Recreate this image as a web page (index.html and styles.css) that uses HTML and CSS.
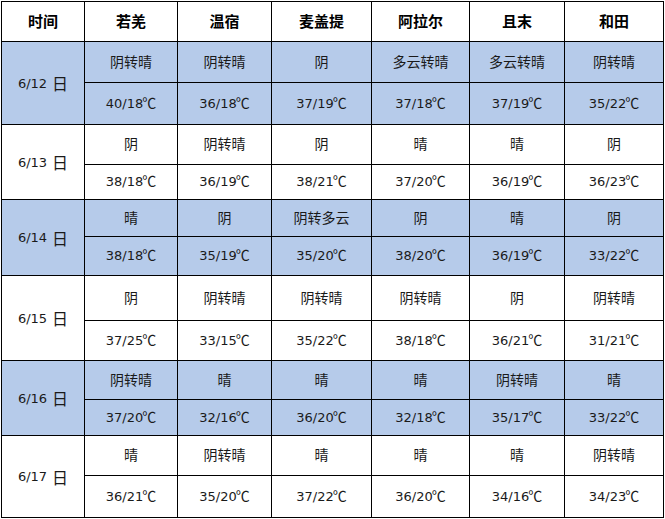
FILE: index.html
```html
<!DOCTYPE html>
<html lang="zh-CN">
<head>
<meta charset="utf-8">
<link rel="stylesheet" href="styles.css">
</head>
<body>
<div class="sheet">
  <div class="head">时间</div>
  <div class="head">若羌</div>
  <div class="head">温宿</div>
  <div class="head">麦盖提</div>
  <div class="head">阿拉尔</div>
  <div class="head">且末</div>
  <div class="head">和田</div>

  <div class="date blue">6/12<span class="ri">日</span></div>
  <div class="w blue">阴转晴</div><div class="w blue">阴转晴</div><div class="w blue">阴</div><div class="w blue">多云转晴</div><div class="w blue">多云转晴</div><div class="w blue">阴转晴</div>
  <div class="t blue">40/18<span class="deg">℃</span></div><div class="t blue">36/18<span class="deg">℃</span></div><div class="t blue">37/19<span class="deg">℃</span></div><div class="t blue">37/18<span class="deg">℃</span></div><div class="t blue">37/19<span class="deg">℃</span></div><div class="t blue">35/22<span class="deg">℃</span></div>

  <div class="date">6/13<span class="ri">日</span></div>
  <div class="w">阴</div><div class="w">阴转晴</div><div class="w">阴</div><div class="w">晴</div><div class="w">晴</div><div class="w">阴</div>
  <div class="t">38/18<span class="deg">℃</span></div><div class="t">36/19<span class="deg">℃</span></div><div class="t">38/21<span class="deg">℃</span></div><div class="t">37/20<span class="deg">℃</span></div><div class="t">36/19<span class="deg">℃</span></div><div class="t">36/23<span class="deg">℃</span></div>

  <div class="date blue">6/14<span class="ri">日</span></div>
  <div class="w blue">晴</div><div class="w blue">阴</div><div class="w blue">阴转多云</div><div class="w blue">阴</div><div class="w blue">晴</div><div class="w blue">阴</div>
  <div class="t blue">38/18<span class="deg">℃</span></div><div class="t blue">35/19<span class="deg">℃</span></div><div class="t blue">35/20<span class="deg">℃</span></div><div class="t blue">38/20<span class="deg">℃</span></div><div class="t blue">36/19<span class="deg">℃</span></div><div class="t blue">33/22<span class="deg">℃</span></div>

  <div class="date">6/15<span class="ri">日</span></div>
  <div class="w">阴</div><div class="w">阴转晴</div><div class="w">阴转晴</div><div class="w">阴转晴</div><div class="w">阴</div><div class="w">阴转晴</div>
  <div class="t">37/25<span class="deg">℃</span></div><div class="t">33/15<span class="deg">℃</span></div><div class="t">35/22<span class="deg">℃</span></div><div class="t">38/18<span class="deg">℃</span></div><div class="t">36/21<span class="deg">℃</span></div><div class="t">31/21<span class="deg">℃</span></div>

  <div class="date blue">6/16<span class="ri">日</span></div>
  <div class="w blue">阴转晴</div><div class="w blue">晴</div><div class="w blue">晴</div><div class="w blue">晴</div><div class="w blue">阴转晴</div><div class="w blue">晴</div>
  <div class="t blue">37/20<span class="deg">℃</span></div><div class="t blue">32/16<span class="deg">℃</span></div><div class="t blue">36/20<span class="deg">℃</span></div><div class="t blue">32/18<span class="deg">℃</span></div><div class="t blue">35/17<span class="deg">℃</span></div><div class="t blue">33/22<span class="deg">℃</span></div>

  <div class="date">6/17<span class="ri">日</span></div>
  <div class="w">晴</div><div class="w">阴转晴</div><div class="w">晴</div><div class="w">晴</div><div class="w">晴</div><div class="w">阴转晴</div>
  <div class="t">36/21<span class="deg">℃</span></div><div class="t">35/20<span class="deg">℃</span></div><div class="t">37/22<span class="deg">℃</span></div><div class="t">36/20<span class="deg">℃</span></div><div class="t">34/16<span class="deg">℃</span></div><div class="t">34/23<span class="deg">℃</span></div>
</div>
</body>
</html>
```

FILE: styles.css
```css
html, body {
  margin: 0;
  padding: 0;
  background: #ffffff;
}
body {
  padding: 1px 0 0 1px;
}
.sheet {
  display: grid;
  grid-template-columns: 82px 92px 93px 99px 97px 94px 98px;
  grid-template-rows: 39px 40px 41px 39px 34px 36px 38px 44px 39px 38px 35px 39px 41px;
  gap: 1px;
  padding: 1px;
  background: #000000;
  width: max-content;
  font-family: "DejaVu Sans", "Noto Sans CJK SC", sans-serif;
  color: #1a1a1a;
}
.sheet > div {
  background: #ffffff;
  display: flex;
  align-items: center;
  justify-content: center;
  white-space: nowrap;
}
.sheet > div.blue {
  background: #b6cbea;
}
.head {
  font-family: "Noto Sans CJK SC", sans-serif;
  font-weight: bold;
  font-size: 15px;
  color: #000000;
  padding-bottom: 2px;
}
.date {
  grid-row: span 2;
  font-size: 13px;
}
.ri {
  font-family: "Noto Sans CJK SC", sans-serif;
  font-size: 16px;
  margin-left: 5px;
}
.w {
  font-family: "Noto Sans CJK SC", sans-serif;
  font-size: 14px;
  padding-bottom: 3px;
}
.t {
  font-size: 13px;
  line-height: 16px;
}
.deg {
  display: inline-block;
  font-family: "Noto Sans CJK SC", sans-serif;
  font-size: 14px;
  line-height: 14px;
  margin-left: -1px;
  transform: translateY(-2px);
}
```
